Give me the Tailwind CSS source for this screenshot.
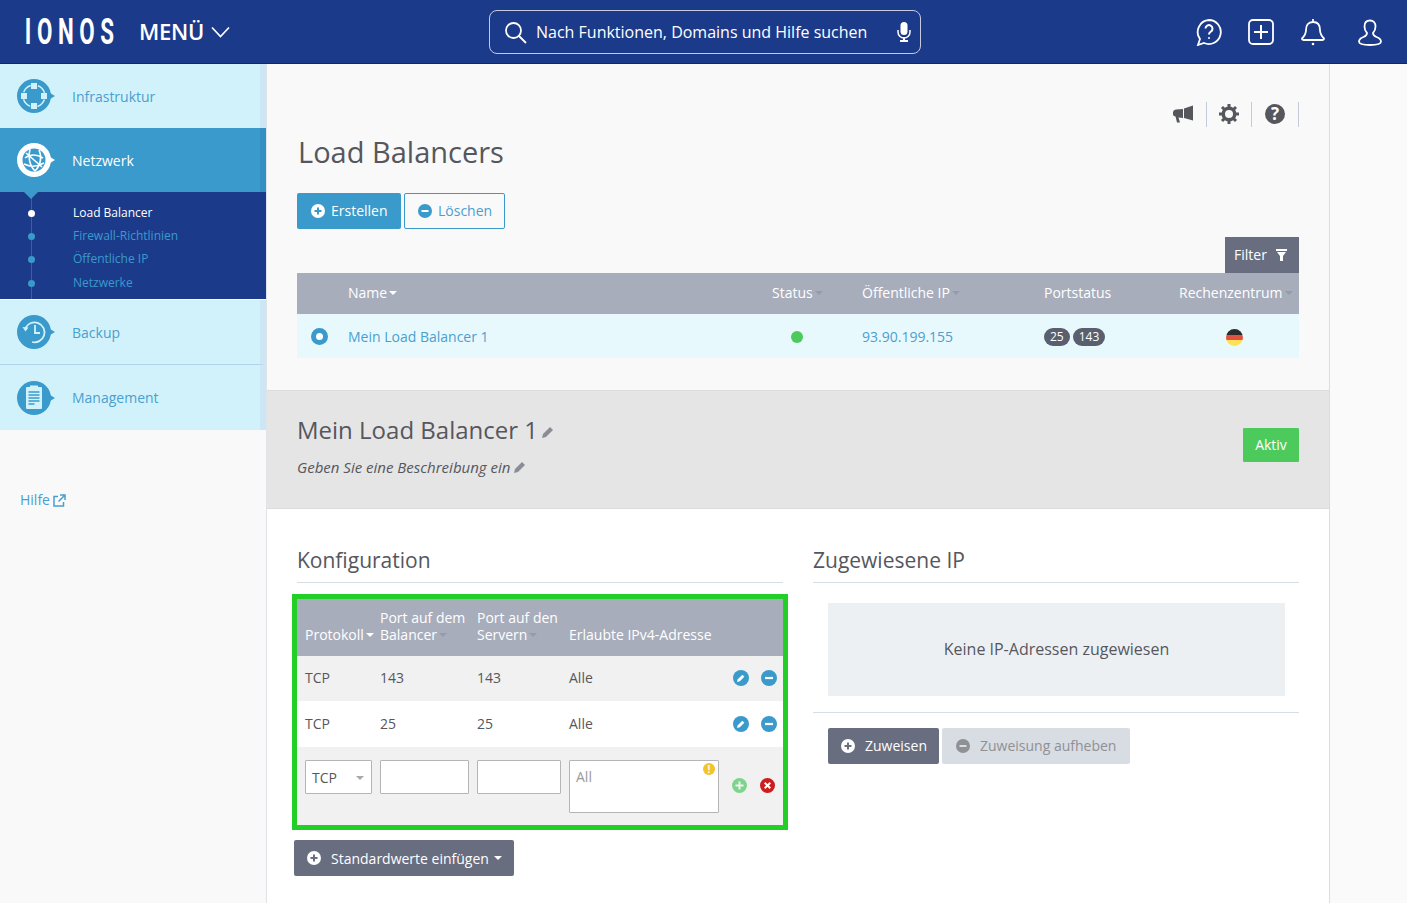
<!DOCTYPE html>
<html lang="de">
<head>
    <meta charset="UTF-8">
    <title>Load Balancers</title>
    <script src="https://cdn.jsdelivr.net/npm/@tailwindcss/browser@4"></script>
</head>
<body class="h-[903px] overflow-hidden bg-[#fafafa] font-['Open_Sans',sans-serif] text-[14px] text-[#55575d]">

    <!-- Header -->
    <header class="h-[64px] bg-[#1b3a8a] border-b border-[#12285f] flex items-center relative">
        <div class="w-[139px] pl-[40px] text-white font-bold text-[36px] leading-none tracking-[9px] origin-left scale-x-[0.62] whitespace-nowrap font-['Roboto',sans-serif]">IONOS</div>
        <div class="flex items-center gap-[7px] text-white font-semibold text-[22px] tracking-[-0.3px] leading-none">
            <span class="mb-[2px]">MENÜ</span>
            <svg width="19" height="12" viewBox="0 0 19 12" fill="none" stroke="white" stroke-width="1.7"><path d="M1 1.5l8.5 9 8.5-9"/></svg>
        </div>
        <div class="absolute left-[489px] top-[10px] w-[432px] h-[44px] border border-[#c3cbe0] rounded-[8px] flex items-center pl-[14px] text-white text-[16px]">
            <svg width="23" height="23" viewBox="0 0 23 23" fill="none" stroke="white" stroke-width="1.8"><circle cx="9.5" cy="9.5" r="7.5"/><path d="M15 15l7 7"/></svg>
            <span class="ml-[9px] whitespace-nowrap">Nach Funktionen, Domains und Hilfe suchen</span>
            <svg class="ml-[30px]" width="14" height="20" viewBox="0 0 14 20" fill="white"><rect x="3.5" y="0" width="7" height="13" rx="3.5"/><path d="M1 8v2a6 6 0 0 0 12 0V8" fill="none" stroke="white" stroke-width="1.5"/><rect x="6" y="15" width="2" height="3"/><rect x="3" y="18" width="8" height="2"/></svg>
        </div>
        <div class="absolute right-0 top-0 h-[64px] flex items-center">
            <svg class="mr-[25px]" width="28" height="28" viewBox="0 0 28 28" fill="none" stroke="white" stroke-width="1.8"><path d="M14 2a12 12 0 1 1-5 23l-6 2 2-6A12 12 0 0 1 14 2z"/><path d="M10.5 10.5a3.5 3.5 0 1 1 5.5 3c-1.300 1-2 1.500-2 3" stroke-width="2"/><circle cx="14" cy="20" r="1" fill="white" stroke="none"/></svg>
            <svg class="mr-[26px]" width="26" height="26" viewBox="0 0 26 26" fill="none" stroke="white" stroke-width="1.8"><rect x="1" y="1" width="24" height="24" rx="4"/><path d="M13 6v14M6 13h14" stroke-width="2"/></svg>
            <svg class="mr-[32px]" width="26" height="28" viewBox="0 0 26 28" fill="none" stroke="white" stroke-width="1.8"><path d="M13 1v3M13 4c-5 0-7 3.500-7 8 0 4-1.500 6-4 8.500 0 1 1 1.500 2 1.500h18c1 0 2-.5 2-1.500-2.500-2.500-4-4.500-4-8.500 0-4.500-2-8-7-8z"/><circle cx="13" cy="26" r="1.300" fill="white" stroke="none"/></svg>
            <svg class="mr-[25px]" width="24" height="27" viewBox="0 0 24 27" fill="none" stroke="white" stroke-width="1.8"><path d="M12 1.500c-3.500 0-5.500 2.500-5.500 6 0 3 1 5 2.500 6.500 0 2-1 3-3.500 4C3 19 1 20.500 1 22.500S4 26 12 26s11-1.500 11-3.500-2-3.500-4.500-4.500C16 17 15 16 15 14c1.500-1.500 2.500-3.500 2.500-6.500 0-3.500-2-6-5.500-6z"/></svg>
        </div>
    </header>

    <div class="flex h-[839px]">

        <!-- Sidebar -->
        <aside class="w-[267px] shrink-0 bg-[#f9f9f9] border-r border-[#e0e3e8]">
            <div class="h-[64px] bg-[#d2f2fb] border-r-[6px] border-[#cde6f5] flex items-center pl-[17px] text-[#4a9fd0]">
                <svg width="38" height="34" viewBox="0 0 38 34" class="shrink-0"><circle cx="17" cy="17" r="17" fill="#3a9acb"/><path d="M33 14l5 3-5 3z" fill="#3a9acb"/><circle cx="17" cy="17" r="11" fill="none" stroke="#d2f2fb" stroke-width="1.500" stroke-dasharray="10 7.280" stroke-dashoffset="-3.640"/><rect x="14" y="4" width="6" height="6" fill="#d2f2fb"/><rect x="14" y="24" width="6" height="6" fill="#d2f2fb"/><rect x="4" y="14" width="6" height="6" fill="#d2f2fb"/><rect x="24" y="14" width="6" height="6" fill="#d2f2fb"/></svg>
                <span class="ml-[17px]">Infrastruktur</span>
            </div>
            <div class="h-[64px] bg-[#3a9acb] border-r-[6px] border-[#368fc2] flex items-center pl-[17px] text-white relative">
                <svg width="38" height="34" viewBox="0 0 38 34" class="shrink-0"><circle cx="17" cy="17" r="17" fill="white"/><path d="M33 14l5 3-5 3z" fill="white"/><circle cx="17" cy="17" r="11.500" fill="#3a9acb"/><path d="M8 15c5-4 12-4 18 0M7 21c6 3 13 3 20-1M13 6c-2 7-1 16 5 22M22 7c3 6 2 15-4 21M9 10l16 14" fill="none" stroke="white" stroke-width="1.600"/></svg>
                <span class="ml-[17px]">Netzwerk</span>
                <span class="absolute left-[24px] top-[64px] z-10 w-0 h-0 border-x-[7px] border-x-transparent border-t-[7px] border-t-[#3a9acb]"></span>
            </div>
            <div class="h-[107px] bg-[#1b3a8a] relative pt-[10px] text-[12px]">
                <span class="absolute left-[31px] top-0 bottom-0 w-px bg-[#2d66a8]"></span>
                <a class="flex items-center h-[23px] text-white"><span class="w-[7px] h-[7px] rounded-full bg-white ml-[28px] mr-[38px] relative"></span><span class="mb-[2px]">Load Balancer</span></a>
                <a class="flex items-center h-[23px] text-[#3a9acb]"><span class="w-[7px] h-[7px] rounded-full bg-[#3a9acb] ml-[28px] mr-[38px] relative"></span><span class="mb-[2px]">Firewall-Richtlinien</span></a>
                <a class="flex items-center h-[23px] text-[#3a9acb]"><span class="w-[7px] h-[7px] rounded-full bg-[#3a9acb] ml-[28px] mr-[38px] relative"></span><span class="mb-[2px]">Öffentliche IP</span></a>
                <a class="flex items-center h-[24px] text-[#3a9acb]"><span class="w-[7px] h-[7px] rounded-full bg-[#3a9acb] ml-[28px] mr-[38px] relative"></span><span>Netzwerke</span></a>
            </div>
            <div class="h-[65px] mt-px bg-[#d2f2fb] border-r-[6px] border-[#cde6f5] border-b border-b-[#b0d4ec] flex items-center pl-[17px] text-[#4a9fd0]">
                <svg width="38" height="34" viewBox="0 0 38 34" class="shrink-0"><circle cx="17" cy="17" r="17" fill="#3a9acb"/><path d="M33 14l5 3-5 3z" fill="#3a9acb"/><path d="M8.500 13A10 10 0 1 1 15 27" fill="none" stroke="#d2f2fb" stroke-width="1.800"/><path d="M5.500 12l6 .5-3 4z" fill="#d2f2fb"/><path d="M18 10v8h5" fill="none" stroke="#d2f2fb" stroke-width="1.800"/></svg>
                <span class="ml-[17px]">Backup</span>
            </div>
            <div class="h-[65px] bg-[#d2f2fb] border-r-[6px] border-[#cde6f5] flex items-center pl-[17px] text-[#4a9fd0]">
                <svg width="38" height="34" viewBox="0 0 38 34" class="shrink-0"><circle cx="17" cy="17" r="17" fill="#3a9acb"/><path d="M33 14l5 3-5 3z" fill="#3a9acb"/><rect x="9" y="6" width="16" height="22" rx="1" fill="#d2f2fb"/><rect x="13" y="4.500" width="8" height="3" fill="#d2f2fb"/><path d="M11.500 11h11M11.500 14h11M11.500 17h11M11.500 20h11M11.500 23h6" stroke="#3a9acb" stroke-width="1.300"/></svg>
                <span class="ml-[17px]">Management</span>
            </div>
            <a class="flex items-center gap-[3px] mt-[60px] ml-[20px] text-[#4a9fd0] leading-[20px]">
                Hilfe
                <svg width="13" height="13" viewBox="0 0 13 13" fill="none" stroke="#4a9fd0" stroke-width="1.500"><path d="M5 2.500H1v9.500h9.500V8M7 1h5v5M12 1L5.500 7.500"/></svg>
            </a>
        </aside>

        <!-- Main -->
        <main class="w-[1063px] shrink-0 border-r border-[#d8dce3] bg-white">
            <section class="h-[327px] bg-[#f9f9f9] border-b border-[#dcdcdc] relative pl-[30px] pr-[30px]">
                <div class="absolute right-[30px] top-[37px] flex items-center h-[26px]">
                    <svg class="mr-[11px]" width="22" height="18" viewBox="0 0 22 18"><path d="M0 7a3 3 0 0 1 3-2.500L10 4v9l-4.500-.5 1.500 5H4l-1.500-6A3 3 0 0 1 0 7z" fill="#55575d"/><path d="M11 3.500l9-3v15l-9-2.500z" fill="#55575d"/></svg>
                    <span class="w-px h-[25px] bg-[#c5ccd9]"></span>
                    <svg class="mx-[12px]" width="20" height="20" viewBox="0 0 20 20"><path d="M10 2.500a7.500 7.500 0 1 0 0 15 7.500 7.500 0 0 0 0-15zm0 3.500a4 4 0 1 1 0 8 4 4 0 0 1 0-8z" fill="#55575d" fill-rule="evenodd"/><path d="M10 0v4M10 16v4M0 10h4M16 10h4M3 3l3 3M14 14l3 3M3 17l3-3M14 6l3-3" stroke="#55575d" stroke-width="3"/></svg>
                    <span class="w-px h-[25px] bg-[#c5ccd9]"></span>
                    <span class="mx-[13px] w-[20px] h-[20px] rounded-full bg-[#55575d] text-white font-bold text-[17px] leading-[20px] text-center">?</span>
                    <span class="w-px h-[25px] bg-[#c5ccd9]"></span>
                </div>
                <h1 class="pt-[68px] text-[29px] leading-[40px] ml-px">Load Balancers</h1>
                <div class="mt-[21px] flex gap-[3px] h-[36px]">
                    <button class="w-[104px] bg-[#3a9acb] rounded-[2px] text-white flex items-center pl-[14px] gap-[6px]">
                        <svg width="14" height="14" viewBox="0 0 14 14"><circle cx="7" cy="7" r="7" fill="white"/><path d="M7 3.500v7M3.500 7h7" stroke="#3a9acb" stroke-width="2"/></svg><span class="mb-[2px]">Erstellen</span>
                    </button>
                    <button class="w-[101px] border border-[#3a9acb] rounded-[2px] text-[#4a9fd0] flex items-center pl-[13px] gap-[6px]">
                        <svg width="14" height="14" viewBox="0 0 14 14"><circle cx="7" cy="7" r="7" fill="#3a9acb"/><path d="M3.500 7h7" stroke="white" stroke-width="2"/></svg><span class="mb-[2px]">Löschen</span>
                    </button>
                </div>
                <div class="flex justify-end mt-[8px]">
                    <div class="w-[74px] h-[36px] bg-[#686d80] text-white flex items-center pl-[9px] gap-[9px]">
                        <span class="mb-[2px]">Filter</span>
                        <svg width="11" height="12" viewBox="0 0 11 12" fill="white"><path d="M0 0h11v2H0zM1 3h9L7 7v5H4V7z"/></svg>
                    </div>
                </div>
                <div class="grid grid-cols-[51px_424px_90px_182px_135px_120px] items-center h-[41px] pb-[2px] bg-[#a8adbc] text-white">
                    <span></span>
                    <span class="flex items-center gap-[2px]">Name<i class="w-0 h-0 border-x-[4px] border-x-transparent border-t-[4px] border-t-white"></i></span>
                    <span class="flex items-center gap-[2px]">Status<i class="w-0 h-0 border-x-[4px] border-x-transparent border-t-[4px] border-t-[#969bab]"></i></span>
                    <span class="flex items-center gap-[2px]">Öffentliche IP<i class="w-0 h-0 border-x-[4px] border-x-transparent border-t-[4px] border-t-[#969bab]"></i></span>
                    <span>Portstatus</span>
                    <span class="flex items-center gap-[2px] whitespace-nowrap">Rechenzentrum<i class="w-0 h-0 border-x-[4px] border-x-transparent border-t-[4px] border-t-[#969bab]"></i></span>
                </div>
                <div class="grid grid-cols-[51px_424px_90px_182px_135px_120px] items-center h-[44px] bg-[#e8f9fe] text-[#4a9fd0]">
                    <span class="ml-[14px] w-[17px] h-[17px] rounded-full border-[5px] border-[#3a9acb] bg-white"></span>
                    <span>Mein Load Balancer 1</span>
                    <span class="ml-[19px] mt-[2px] w-[12px] h-[12px] rounded-full bg-[#4ccb5c]"></span>
                    <span>93.90.199.155</span>
                    <span class="flex gap-[3px] mt-[2px] text-white text-[12px]">
                        <b class="font-normal h-[18px] leading-[18px] px-[6px] rounded-[9px] bg-[#5a5f70]">25</b>
                        <b class="font-normal h-[18px] leading-[18px] px-[6px] rounded-[9px] bg-[#5a5f70]">143</b>
                    </span>
                    <span class="ml-[47px] mt-[2px] w-[17px] h-[17px] rounded-full bg-[linear-gradient(#2b2b2b_0_33%,#e2513f_33%_66%,#fde156_66%)]"></span>
                </div>
            </section>

            <section class="h-[118px] bg-[#e5e5e5] border-b border-[#dcdcdc] pl-[30px] pr-[30px] relative">
                <h2 class="pt-[22px] text-[24px] leading-[34px] flex items-center gap-[4px]">Mein Load Balancer 1
                    <svg class="mt-[4px]" width="12" height="12" viewBox="0 0 12 12" fill="#8a8d96"><path d="M0 12l1-4 7-7 3 3-7 7z"/></svg>
                </h2>
                <p class="mt-[10px] italic text-[15px] leading-[20px] flex items-center gap-[4px]">Geben Sie eine Beschreibung ein
                    <svg width="12" height="12" viewBox="0 0 12 12" fill="#8a8d96"><path d="M0 12l1-4 7-7 3 3-7 7z"/></svg>
                </p>
                <span class="absolute right-[30px] top-[37px] w-[56px] h-[34px] bg-[#4ccb5c] rounded-[1px] text-white leading-[34px] text-center">Aktiv</span>
            </section>

            <section class="flex pl-[25px] pr-[30px]">
                <div class="w-[496px] shrink-0">
                    <h3 class="ml-[5px] mt-[34px] h-[40px] w-[486px] border-b border-[#d8dce3] text-[21px] leading-[34px]">Konfiguration</h3>
                    <div class="mt-[11px] border-[5px] border-[#22cf27] w-[496px]">
                        <div class="grid grid-cols-[75px_97px_92px_1fr] items-end h-[57px] bg-[#a8adbc] text-white leading-[17px] pl-[8px] pb-[13px]">
                            <span class="flex items-center gap-[2px]">Protokoll<i class="w-0 h-0 border-x-[4px] border-x-transparent border-t-[4px] border-t-white"></i></span>
                            <span>Port auf dem<br><span class="inline-flex items-center gap-[2px]">Balancer<i class="w-0 h-0 border-x-[4px] border-x-transparent border-t-[4px] border-t-[#969bab]"></i></span></span>
                            <span>Port auf den<br><span class="inline-flex items-center gap-[2px]">Servern<i class="w-0 h-0 border-x-[4px] border-x-transparent border-t-[4px] border-t-[#969bab]"></i></span></span>
                            <span>Erlaubte IPv4-Adresse</span>
                        </div>
                        <div class="grid grid-cols-[75px_97px_92px_1fr_28px_22px] items-center h-[45px] pb-[2px] bg-[#f1f1f1] pl-[8px]">
                            <span>TCP</span><span>143</span><span>143</span><span>Alle</span>
                            <svg width="16" height="16" viewBox="0 0 16 16"><circle cx="8" cy="8" r="8" fill="#3a9acb"/><path d="M4 12l.8-2.800 4.500-4.500 2 2-4.500 4.500z" fill="white"/></svg>
                            <svg width="16" height="16" viewBox="0 0 16 16"><circle cx="8" cy="8" r="8" fill="#3a9acb"/><path d="M4 8h8" stroke="white" stroke-width="2.200"/></svg>
                        </div>
                        <div class="grid grid-cols-[75px_97px_92px_1fr_28px_22px] items-center h-[46px] pb-[2px] bg-white pl-[8px]">
                            <span>TCP</span><span>25</span><span>25</span><span>Alle</span>
                            <svg class="mt-[2px]" width="16" height="16" viewBox="0 0 16 16"><circle cx="8" cy="8" r="8" fill="#3a9acb"/><path d="M4 12l.8-2.800 4.500-4.500 2 2-4.500 4.500z" fill="white"/></svg>
                            <svg class="mt-[2px]" width="16" height="16" viewBox="0 0 16 16"><circle cx="8" cy="8" r="8" fill="#3a9acb"/><path d="M4 8h8" stroke="white" stroke-width="2.200"/></svg>
                        </div>
                        <div class="flex items-start h-[78px] bg-[#f1f1f1] pl-[8px] pt-[13px] relative">
                            <div class="w-[67px] h-[34px] border border-[#b5b5b5] bg-white mr-[8px] pl-[6px] leading-[33px] rounded-[1px] relative">TCP
                                <i class="absolute right-[7px] top-[15px] w-0 h-0 border-x-[4px] border-x-transparent border-t-[4px] border-t-[#a8a8a8]"></i>
                            </div>
                            <div class="w-[89px] h-[34px] border border-[#b5b5b5] bg-white mr-[8px] rounded-[1px]"></div>
                            <div class="w-[84px] h-[34px] border border-[#b5b5b5] bg-white mr-[8px] rounded-[1px]"></div>
                            <div class="w-[150px] h-[53px] border border-[#b5b5b5] bg-white pl-[6px] pt-[6px] leading-[20px] text-[#9a9a9a] rounded-[1px] relative">All
                                <span class="absolute right-[3px] top-[2px] w-[12px] h-[12px] rounded-full bg-[#f3c329] text-white font-bold text-[10px] leading-[12px] text-center">!</span>
                            </div>
                            <svg class="ml-[13px] mt-[18px]" width="15" height="15" viewBox="0 0 15 15"><circle cx="7.500" cy="7.500" r="7.500" fill="#7fd48d"/><path d="M7.500 3.500v8M3.500 7.500h8" stroke="#f1f1f1" stroke-width="2"/></svg>
                            <svg class="ml-[13px] mt-[18px]" width="15" height="15" viewBox="0 0 15 15"><circle cx="7.500" cy="7.500" r="7.500" fill="#cb1d1d"/><path d="M4.700 4.700l5.600 5.600M10.300 4.700l-5.600 5.600" stroke="white" stroke-width="2"/></svg>
                        </div>
                    </div>
                    <button class="mt-[10px] ml-[2px] w-[220px] h-[36px] bg-[#686d80] rounded-[2px] text-white flex items-center pl-[13px]">
                        <svg class="mr-[10px]" width="14" height="14" viewBox="0 0 14 14"><circle cx="7" cy="7" r="7" fill="white"/><path d="M7 3.500v7M3.500 7h7" stroke="#686d80" stroke-width="2"/></svg>
                        Standardwerte einfügen
                        <i class="ml-[5px] w-0 h-0 border-x-[4px] border-x-transparent border-t-[4px] border-t-white"></i>
                    </button>
                </div>
                <div class="ml-[25px] w-[486px]">
                    <h3 class="mt-[34px] h-[40px] border-b border-[#d8dce3] text-[21px] leading-[34px]">Zugewiesene IP</h3>
                    <div class="ml-[15px] mt-[20px] w-[457px] h-[93px] pb-[2px] bg-[#edf0f3] flex items-center justify-center text-[16px]">Keine IP-Adressen zugewiesen</div>
                    <div class="mt-[16px] border-t border-[#d8dce3] pl-[15px] pt-[15px] flex gap-[3px]">
                        <button class="w-[111px] h-[36px] bg-[#686d80] rounded-[2px] text-white flex items-center pl-[13px] gap-[10px]">
                            <svg width="14" height="14" viewBox="0 0 14 14"><circle cx="7" cy="7" r="7" fill="white"/><path d="M7 3.500v7M3.500 7h7" stroke="#686d80" stroke-width="2"/></svg><span class="mb-[2px]">Zuweisen</span>
                        </button>
                        <button class="w-[188px] h-[36px] bg-[#d8dce3] rounded-[2px] text-[#8f9195] flex items-center pl-[14px] gap-[10px]">
                            <svg width="14" height="14" viewBox="0 0 14 14"><circle cx="7" cy="7" r="7" fill="#8f9195"/><path d="M3.500 7h7" stroke="#d8dce3" stroke-width="2"/></svg><span class="mb-[2px]">Zuweisung aufheben</span>
                        </button>
                    </div>
                </div>
            </section>
        </main>
    </div>
</body>
</html>
